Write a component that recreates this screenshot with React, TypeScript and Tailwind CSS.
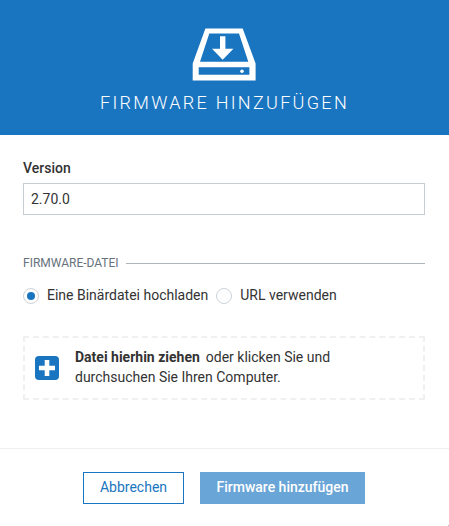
import { useState } from "react";

function DriveIcon() {
  return (
    <svg className="mr-[2px] block h-[53px] w-[64px]" viewBox="12 12.5 64 53" fill="none" aria-hidden="true">
      <path
        fill="#fff"
        fillRule="evenodd"
        d="M25.4 13H62.7L75.6 48V65H12.7V48ZM29.3 18L20 46.3H68.3L59 18ZM18.7 51.7V59.3H69.4V51.7Z"
      />
      <path fill="#fff" d="M40 20.7H45.4V33.3H53.4L42.7 44.2L32 33.3H40Z" />
      <circle cx="62" cy="55.7" r="1.8" fill="#fff" />
    </svg>
  );
}

function RadioOption({ label, checked, onSelect }: { label: string; checked: boolean; onSelect: () => void }) {
  return (
    <label className="flex h-5 items-center gap-[8px] whitespace-nowrap">
      <input type="radio" className="sr-only" checked={checked} onChange={onSelect} />
      <span className="flex size-4 shrink-0 items-center justify-center rounded-full border border-[#cdd3d8]">
        {checked && <span className="size-2 rounded-full bg-[#1a75c0]" />}
      </span>
      <span className="pb-[2px]">{label}</span>
    </label>
  );
}

export default function App() {
  const [version, setVersion] = useState("2.70.0");
  const [source, setSource] = useState("file");

  return (
    <div className="relative flex h-[526px] w-[449px] flex-col overflow-hidden bg-white font-[Roboto,sans-serif] text-[14px] leading-5 text-[#333]">
      <header className="flex h-[135px] flex-col items-center bg-[#1a75c0] pt-[28px] text-white">
        <DriveIcon />
        <h1 className="mt-[10px] whitespace-nowrap text-[18px] font-light leading-6 tracking-[2.3px]">FIRMWARE HINZUFÜGEN</h1>
      </header>

      <main className="flex h-[313px] flex-col px-[23px] pt-[23px] pr-[24px]">
        <label htmlFor="version" className="font-medium">Version</label>
        <input
          id="version"
          className="mt-[5px] h-8 w-full border border-[#c8cdd1] px-[7px] text-[14px] outline-none"
          value={version}
          onChange={(e) => setVersion(e.target.value)}
        />

        <div className="mt-[38px] flex h-5 items-center gap-[7px] text-[12px] text-[#66727c]">
          <span className="whitespace-nowrap">FIRMWARE-DATEI</span>
          <span className="h-px flex-1 bg-[#adb5bb]" />
        </div>

        <div className="mt-[13px] flex gap-[8px]">
          <RadioOption label="Eine Binärdatei hochladen" checked={source === "file"} onSelect={() => setSource("file")} />
          <RadioOption label="URL verwenden" checked={source === "url"} onSelect={() => setSource("url")} />
        </div>

        <div className="mt-[30px] flex h-16 items-center border-2 border-dashed border-[#f0f0f0] pl-[10px]">
          <svg className="size-6 shrink-0" viewBox="0 0 24 24" aria-hidden="true">
            <rect width="24" height="24" rx="4" fill="#1a75c0" />
            <path d="M9.7 4H14.3V9.7H20V14.3H14.3V20H9.7V14.3H4V9.7H9.7Z" fill="#fff" />
          </svg>
          <p className="ml-[16px] whitespace-nowrap pb-[2px]">
            <strong className="mr-[2.5px] font-bold">Datei hierhin ziehen</strong> oder klicken Sie und
            <br />
            durchsuchen Sie Ihren Computer.
          </p>
        </div>
      </main>

      <footer className="flex flex-1 items-start justify-center gap-4 border-t border-[#f0f0f0] pr-[2px] pt-[23px] text-[14px]">
        <button className="h-8 w-[101px] whitespace-nowrap border border-[#1a75c0] pb-[2px] pl-px text-[#1a75c0]">Abbrechen</button>
        <button className="h-8 w-[165px] whitespace-nowrap bg-[#69a5d6] pb-[2px] pl-px font-medium text-white">Firmware hinzufügen</button>
      </footer>

      <span className="absolute right-0 bottom-0 size-px bg-[#b8b8b8]" />
    </div>
  );
}
